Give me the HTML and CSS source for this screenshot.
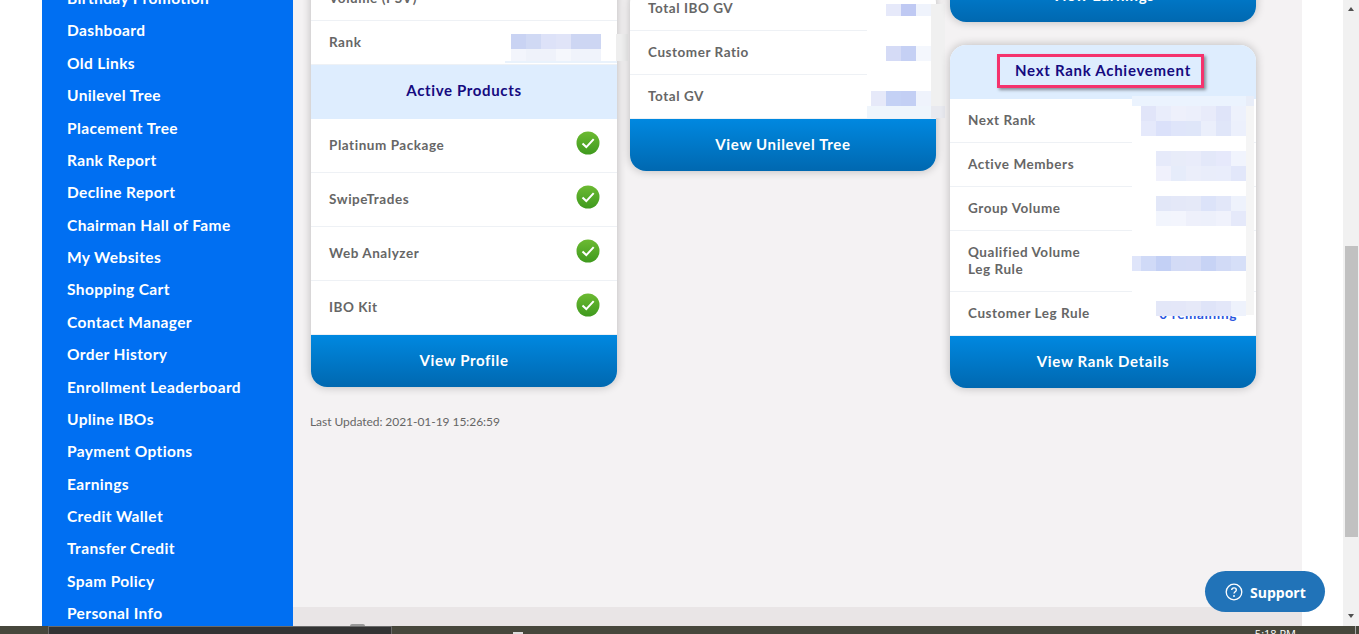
FILE: index.html

```html
<!DOCTYPE html>
<html lang="en">
<head>
  <meta charset="UTF-8">
  <title>Dashboard</title>
  <link rel="stylesheet" href="styles.css">
</head>
<body>

  <div class="page">
    <div class="gutter"></div>

    <nav class="sidebar">
      <a>Birthday Promotion</a>
      <a>Dashboard</a>
      <a>Old Links</a>
      <a>Unilevel Tree</a>
      <a>Placement Tree</a>
      <a>Rank Report</a>
      <a>Decline Report</a>
      <a>Chairman Hall of Fame</a>
      <a>My Websites</a>
      <a>Shopping Cart</a>
      <a>Contact Manager</a>
      <a>Order History</a>
      <a>Enrollment Leaderboard</a>
      <a>Upline IBOs</a>
      <a>Payment Options</a>
      <a>Earnings</a>
      <a>Credit Wallet</a>
      <a>Transfer Credit</a>
      <a>Spam Policy</a>
      <a>Personal Info</a>
    </nav>

    <main class="main">
      <div class="cols">

        <div class="col col-profile">
          <div class="card">
            <div class="row"><span class="label">Volume (PSV)</span></div>
            <div class="row"><span class="label">Rank</span></div>
            <div class="card-head">Active Products</div>
            <div class="row row-product">
              <span class="label">Platinum Package</span>
              <svg class="check" viewBox="0 0 24 24"><use href="#check"/></svg>
            </div>
            <div class="row row-product">
              <span class="label">SwipeTrades</span>
              <svg class="check" viewBox="0 0 24 24"><use href="#check"/></svg>
            </div>
            <div class="row row-product">
              <span class="label">Web Analyzer</span>
              <svg class="check" viewBox="0 0 24 24"><use href="#check"/></svg>
            </div>
            <div class="row row-product">
              <span class="label">IBO Kit</span>
              <svg class="check" viewBox="0 0 24 24"><use href="#check"/></svg>
            </div>
            <a class="card-btn">View Profile</a>

            <!-- blurred values -->
            <svg class="mosaic mosaic-rank" viewBox="505 34 123 29" shape-rendering="crispEdges">
              <rect x="505" y="34" width="111" height="29" fill="#fff"/>
              <rect x="505" y="61" width="112" height="2" fill="#e9f2fc"/>
              <rect x="616" y="34" width="12" height="27" fill="#eeeeee"/>
              <rect x="511" y="34" width="15" height="15" fill="#c9d3f3"/>
              <rect x="526" y="34" width="15" height="15" fill="#d0d9f4"/>
              <rect x="541" y="34" width="15" height="15" fill="#dde2f8"/>
              <rect x="556" y="34" width="15" height="15" fill="#e0e4f8"/>
              <rect x="571" y="34" width="15" height="15" fill="#cdd6f3"/>
              <rect x="586" y="34" width="15" height="15" fill="#cdd6f3"/>
              <rect x="511" y="49" width="15" height="12" fill="#f3f5fc"/>
              <rect x="526" y="49" width="15" height="12" fill="#eff2fa"/>
              <rect x="541" y="49" width="15" height="12" fill="#eff2fa"/>
              <rect x="556" y="49" width="15" height="12" fill="#f5f7fc"/>
              <rect x="571" y="49" width="15" height="12" fill="#f0f3fb"/>
              <rect x="586" y="49" width="15" height="12" fill="#f0f3fb"/>
            </svg>
          </div>
          <p class="updated">Last Updated: 2021-01-19 15:26:59</p>
        </div>

        <div class="col col-tree">
          <div class="card">
            <div class="row"><span class="label">Total IBO GV</span><span class="value">IBO</span></div>
            <div class="row"><span class="label">Customer Ratio</span></div>
            <div class="row"><span class="label">Total GV</span></div>
            <a class="card-btn">View Unilevel Tree</a>

            <svg class="mosaic mosaic-tree" viewBox="867 4 78 114" shape-rendering="crispEdges">
              <rect x="867" y="4" width="64" height="102" fill="#fff"/>
              <rect x="931" y="4" width="14" height="102" fill="#f0f0f0"/>
              <rect x="867" y="106" width="64" height="12" fill="#eff5fc"/>
              <rect x="931" y="106" width="14" height="12" fill="#e8e9ef"/>
              <rect x="886" y="4" width="15" height="12" fill="#e6e9fa"/>
              <rect x="901" y="4" width="15" height="12" fill="#bfc9f3"/>
              <rect x="916" y="4" width="15" height="12" fill="#eff3fc"/>
              <rect x="886" y="46" width="15" height="15" fill="#d5dbf6"/>
              <rect x="901" y="46" width="15" height="15" fill="#c5d0f4"/>
              <rect x="916" y="46" width="15" height="15" fill="#f4f7fd"/>
              <rect x="871" y="91" width="15" height="15" fill="#e6e9f9"/>
              <rect x="886" y="91" width="15" height="15" fill="#c4d1f5"/>
              <rect x="901" y="91" width="15" height="15" fill="#c3cff4"/>
              <rect x="916" y="91" width="15" height="15" fill="#eff3fc"/>
            </svg>
          </div>
        </div>

        <div class="col col-rank">
          <div class="card">
            <a class="card-btn card-btn-solo">View Earnings</a>
          </div>
          <div class="card">
            <div class="card-head card-head-top"><span class="marked">Next Rank Achievement</span></div>
            <div class="row"><span class="label">Next Rank</span></div>
            <div class="row"><span class="label">Active Members</span></div>
            <div class="row"><span class="label">Group Volume</span></div>
            <div class="row row-tall"><span class="label">Qualified Volume<br>Leg Rule</span></div>
            <div class="row"><span class="label">Customer Leg Rule</span><span class="value">0 remaining</span></div>
            <a class="card-btn">View Rank Details</a>

            <svg class="mosaic mosaic-next" viewBox="1132 96 122 220" shape-rendering="crispEdges">
              <rect x="1132" y="96" width="114" height="10" fill="#ebf3fe"/>
              <rect x="1246" y="96" width="8" height="10" fill="#e8edf8"/>
              <rect x="1132" y="106" width="114" height="195" fill="#fff"/>
              <rect x="1246" y="106" width="8" height="209" fill="#f5f5f5"/>

              <rect x="1141" y="106" width="15" height="15" fill="#e1e5f9"/>
              <rect x="1156" y="106" width="15" height="15" fill="#e9edfb"/>
              <rect x="1171" y="106" width="15" height="15" fill="#eef0fb"/>
              <rect x="1186" y="106" width="15" height="15" fill="#eceffb"/>
              <rect x="1201" y="106" width="15" height="15" fill="#e8ebfa"/>
              <rect x="1216" y="106" width="15" height="15" fill="#dfe4f9"/>
              <rect x="1231" y="106" width="15" height="15" fill="#edf1fc"/>
              <rect x="1141" y="121" width="15" height="15" fill="#e5e9fb"/>
              <rect x="1156" y="121" width="15" height="15" fill="#dbe1fa"/>
              <rect x="1171" y="121" width="15" height="15" fill="#dfe5fa"/>
              <rect x="1186" y="121" width="15" height="15" fill="#dfe6f9"/>
              <rect x="1201" y="121" width="15" height="15" fill="#ebeffb"/>
              <rect x="1216" y="121" width="15" height="15" fill="#e0e6f9"/>
              <rect x="1231" y="121" width="15" height="15" fill="#ecf0fc"/>

              <rect x="1156" y="151" width="15" height="15" fill="#e6eafa"/>
              <rect x="1171" y="151" width="15" height="15" fill="#e8ecf9"/>
              <rect x="1186" y="151" width="15" height="15" fill="#e9ecfa"/>
              <rect x="1201" y="151" width="15" height="15" fill="#e3e8f9"/>
              <rect x="1216" y="151" width="15" height="15" fill="#e6e9fb"/>
              <rect x="1231" y="151" width="15" height="15" fill="#f1f4fd"/>
              <rect x="1156" y="166" width="15" height="15" fill="#f0f1fc"/>
              <rect x="1171" y="166" width="15" height="15" fill="#e6ecfa"/>
              <rect x="1186" y="166" width="15" height="15" fill="#ebeefa"/>
              <rect x="1201" y="166" width="15" height="15" fill="#e9edfa"/>
              <rect x="1216" y="166" width="15" height="15" fill="#e9edfb"/>
              <rect x="1231" y="166" width="15" height="15" fill="#e2e7fa"/>

              <rect x="1156" y="196" width="15" height="15" fill="#e2e7f8"/>
              <rect x="1171" y="196" width="15" height="15" fill="#e4e8f8"/>
              <rect x="1186" y="196" width="15" height="15" fill="#e5e9f8"/>
              <rect x="1201" y="196" width="15" height="15" fill="#dce3f9"/>
              <rect x="1216" y="196" width="15" height="15" fill="#e2e7f9"/>
              <rect x="1231" y="196" width="15" height="15" fill="#eef2fc"/>
              <rect x="1156" y="211" width="15" height="15" fill="#f2f5fd"/>
              <rect x="1171" y="211" width="15" height="15" fill="#f3f5fd"/>
              <rect x="1186" y="211" width="15" height="15" fill="#eef0fb"/>
              <rect x="1201" y="211" width="15" height="15" fill="#edf0fb"/>
              <rect x="1216" y="211" width="15" height="15" fill="#f0f2fc"/>
              <rect x="1231" y="211" width="15" height="15" fill="#e5e9fa"/>

              <rect x="1132" y="256" width="9" height="15" fill="#dfe5fa"/>
              <rect x="1141" y="256" width="15" height="15" fill="#d0daf7"/>
              <rect x="1156" y="256" width="15" height="15" fill="#c3d0f5"/>
              <rect x="1171" y="256" width="15" height="15" fill="#d3dbf6"/>
              <rect x="1186" y="256" width="15" height="15" fill="#d4dbf6"/>
              <rect x="1201" y="256" width="15" height="15" fill="#c7d3f5"/>
              <rect x="1216" y="256" width="15" height="15" fill="#d1daf6"/>
              <rect x="1231" y="256" width="15" height="15" fill="#d6dff8"/>

              <rect x="1156" y="301" width="15" height="15" fill="#e3e7f8"/>
              <rect x="1171" y="301" width="15" height="15" fill="#e4e7f8"/>
              <rect x="1186" y="301" width="15" height="15" fill="#e6e9f8"/>
              <rect x="1201" y="301" width="15" height="15" fill="#dfe4f8"/>
              <rect x="1216" y="301" width="15" height="15" fill="#e3e7f9"/>
              <rect x="1231" y="301" width="15" height="15" fill="#eef2fc"/>
            </svg>
          </div>
        </div>

      </div>

      <div class="footer-strip"><span class="footer-mark"></span></div>
    </main>

    <div class="margin-right"></div>

    <div class="scrollbar">
      <span class="arrow-up"></span>
      <span class="thumb"></span>
      <span class="arrow-down"></span>
    </div>

    <a class="support">
      <svg class="support-icon" viewBox="0 0 18 18">
        <circle cx="9" cy="9" r="7.8" fill="none" stroke="#fff" stroke-width="1.3"/>
        <path d="M6.7 7.1c0-1.4 1-2.2 2.3-2.2s2.3.8 2.3 2c0 1.9-2.3 1.9-2.3 3.7" fill="none" stroke="#fff" stroke-width="1.4"/>
        <circle cx="9" cy="13" r=".95" fill="#fff"/>
      </svg>
      <span class="support-text">Support</span>
    </a>
  </div>

  <div class="taskbar">
    <span class="task-window"></span>
    <span class="task-mark"></span>
    <span class="task-time">5:18 PM</span>
    <span class="task-edge"></span>
  </div>

  <svg class="defs" width="0" height="0">
    <defs>
      <linearGradient id="check-fill" x1="0" y1="0" x2="0" y2="1">
        <stop offset="0" stop-color="#6cba32"/>
        <stop offset="1" stop-color="#3f9a1e"/>
      </linearGradient>
      <g id="check">
        <circle cx="12" cy="12" r="11.5" fill="url(#check-fill)"/>
        <path d="M6.5 12.5l3.8 3.6 7.4-8" fill="none" stroke="#fff" stroke-width="2"/>
      </g>
    </defs>
  </svg>

</body>
</html>
```

FILE: styles.css

```css
* {
  box-sizing: border-box;
}
html, body {
  margin: 0;
  padding: 0;
  height: 634px;
  overflow: hidden;
}
body {
  background: #fff;
  font-family: 'Lato', sans-serif;
  color: #666;
}
.defs {
  position: absolute;
}
.page {
  position: relative;
  display: flex;
  height: 626px;
  overflow: hidden;
}
.gutter {
  width: 42px;
  flex: none;
}

/* sidebar */
.sidebar {
  width: 251px;
  flex: none;
  background: #006ff2;
  overflow: hidden;
}
.sidebar a {
  display: flex;
  align-items: center;
  height: 32.39px;
  padding-left: 25px;
  color: #fff;
  font-size: 15.5px;
  font-weight: 700;
  letter-spacing: .38px;
  position: relative;
  top: -18.2px;
}

/* main column */
.main {
  width: 1009px;
  flex: none;
  display: flex;
  flex-direction: column;
  background: #f4f2f3;
  overflow: hidden;
}
.cols {
  display: flex;
  align-items: flex-start;
  gap: 13px;
  margin-top: -30px;
  padding-left: 18px;
}
.col {
  width: 306px;
  flex: none;
}
.col-profile {
  margin-top: 7px;
}
.col-tree {
  margin-top: 17px;
}
.col-rank {
  margin-left: 1px;
}
.col-rank .card + .card {
  margin-top: 23px;
}
.card {
  position: relative;
  background: #fff;
  border-radius: 16px;
  box-shadow: 0 0 10px rgba(0, 0, 0, .24);
}
.row {
  display: flex;
  align-items: center;
  justify-content: space-between;
  height: 44px;
  padding: 0 19px 0 18px;
  border-bottom: 1px solid #eef1f5;
}
.row-product {
  height: 54px;
  padding-bottom: 1px;
}
.row-tall {
  height: 61px;
}
.label {
  font-size: 13.5px;
  font-weight: 700;
  letter-spacing: .55px;
  line-height: 17px;
  color: #666;
}
.value {
  font-size: 13.5px;
  font-weight: 700;
  letter-spacing: .65px;
  color: #2a57e0;
}
.check {
  width: 24px;
  height: 24px;
  margin: 0 -2px 4px 0;
}
.card-head {
  display: flex;
  align-items: center;
  justify-content: center;
  height: 54px;
  padding-bottom: 4px;
  background: #deedfe;
  color: #150a80;
  font-size: 15px;
  font-weight: 700;
  letter-spacing: .65px;
}
.card-head-top {
  padding-bottom: 2px;
  border-radius: 16px 16px 0 0;
  letter-spacing: .72px;
}
.marked {
  padding: 4px 10px 6px 15px;
  margin-right: 5px;
  line-height: 18px;
  border: 3px solid #f5336d;
  box-shadow: 2px 2px 3px rgba(0, 0, 0, .4);
}
.card-btn {
  display: flex;
  align-items: center;
  justify-content: center;
  height: 52px;
  padding-bottom: 2px;
  background: linear-gradient(#0088e0, #0068b0);
  border-radius: 0 0 16px 16px;
  color: #fff;
  font-size: 15px;
  font-weight: 700;
  letter-spacing: .65px;
}
.updated {
  margin: 27px 0 0 -1px;
  font-size: 12px;
  line-height: 15px;
  letter-spacing: -.05px;
  color: #666;
}

/* blurred values */
.mosaic {
  position: absolute;
  overflow: visible;
}
.mosaic-rank {
  left: 194px;
  top: 57px;
  width: 123px;
  height: 29px;
}
.mosaic-tree {
  left: 237px;
  top: 17px;
  width: 78px;
  height: 114px;
}
.mosaic-next {
  left: 182px;
  top: 51px;
  width: 122px;
  height: 220px;
}

.footer-strip {
  display: flex;
  align-items: flex-end;
  margin-top: auto;
  height: 19px;
  padding-left: 57px;
  background: #e9e5e6;
}
.footer-mark {
  width: 15px;
  height: 2px;
  background: #999;
  border-radius: 8px 8px 0 0;
}
.margin-right {
  width: 41px;
  flex: none;
}

/* scrollbar */
.scrollbar {
  width: 16px;
  flex: none;
  display: flex;
  flex-direction: column;
  background: #f1f1f1;
}
.arrow-up, .arrow-down {
  width: 0;
  height: 0;
  margin-left: 5px;
  border-left: 3.5px solid transparent;
  border-right: 3.5px solid transparent;
}
.arrow-up {
  margin-top: 7px;
  border-bottom: 4px solid #505050;
}
.arrow-down {
  margin-top: auto;
  margin-bottom: 8px;
  border-top: 4px solid #505050;
}
.thumb {
  width: 13px;
  height: 291px;
  margin: 235px 0 0 2px;
  background: #c1c1c1;
}

/* support button */
.support {
  position: absolute;
  left: 1205px;
  top: 571px;
  display: flex;
  align-items: center;
  gap: 7px;
  width: 120px;
  height: 41px;
  padding-left: 20px;
  border-radius: 21px;
  background: #2173b8;
  color: #fff;
  font-family: 'Open Sans', sans-serif;
  font-size: 14px;
  font-weight: 700;
}
.support-icon {
  width: 18px;
  height: 18px;
}
.support-text {
  position: relative;
  top: 1px;
}

/* taskbar */
.taskbar {
  position: relative;
  display: flex;
  height: 8px;
  padding-left: 48px;
  background: #47473c;
  overflow: hidden;
}
.task-window {
  width: 344px;
  flex: none;
  background: #333;
  border: 1px solid #6a6a6a;
  border-bottom: 0;
}
.task-mark {
  width: 10px;
  height: 2px;
  margin: 6px 0 0 121px;
  background: #ddd;
}
.task-time {
  margin-left: auto;
  margin-right: 63px;
  margin-top: 1px;
  color: #fff;
  font-family: 'Open Sans', sans-serif;
  font-size: 11px;
  line-height: 14px;
  white-space: nowrap;
}
.task-edge {
  position: absolute;
  left: 1355px;
  top: 0;
  width: 1px;
  height: 8px;
  background: #aaa;
}
```
